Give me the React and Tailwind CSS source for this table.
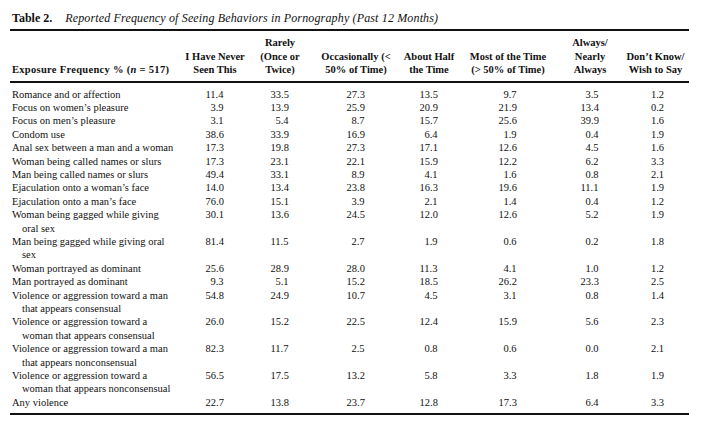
import React from "react";

const cols = "grid grid-cols-[172px_66px_64px_88px_58px_100px_64px_67px]";

const headers = [
  ["I Have Never", "Seen This"],
  ["Rarely", "(Once or", "Twice)"],
  ["Occasionally (<", "50% of Time)"],
  ["About Half", "the Time"],
  ["Most of the Time", "(> 50% of Time)"],
  ["Always/", "Nearly", "Always"],
  ["Don\u2019t Know/", "Wish to Say"],
];

const rows = [
  [["Romance and or affection"], "11.4 33.5 27.3 13.5 9.7 3.5 1.2"],
  [["Focus on women\u2019s pleasure"], "3.9 13.9 25.9 20.9 21.9 13.4 0.2"],
  [["Focus on men\u2019s pleasure"], "3.1 5.4 8.7 15.7 25.6 39.9 1.6"],
  [["Condom use"], "38.6 33.9 16.9 6.4 1.9 0.4 1.9"],
  [["Anal sex between a man and a woman"], "17.3 19.8 27.3 17.1 12.6 4.5 1.6"],
  [["Woman being called names or slurs"], "17.3 23.1 22.1 15.9 12.2 6.2 3.3"],
  [["Man being called names or slurs"], "49.4 33.1 8.9 4.1 1.6 0.8 2.1"],
  [["Ejaculation onto a woman\u2019s face"], "14.0 13.4 23.8 16.3 19.6 11.1 1.9"],
  [["Ejaculation onto a man\u2019s face"], "76.0 15.1 3.9 2.1 1.4 0.4 1.2"],
  [["Woman being gagged while giving", "oral sex"], "30.1 13.6 24.5 12.0 12.6 5.2 1.9"],
  [["Man being gagged while giving oral", "sex"], "81.4 11.5 2.7 1.9 0.6 0.2 1.8"],
  [["Woman portrayed as dominant"], "25.6 28.9 28.0 11.3 4.1 1.0 1.2"],
  [["Man portrayed as dominant"], "9.3 5.1 15.2 18.5 26.2 23.3 2.5"],
  [["Violence or aggression toward a man", "that appears consensual"], "54.8 24.9 10.7 4.5 3.1 0.8 1.4"],
  [["Violence or aggression toward a", "woman that appears consensual"], "26.0 15.2 22.5 12.4 15.9 5.6 2.3"],
  [["Violence or aggression toward a man", "that appears nonconsensual"], "82.3 11.7 2.5 0.8 0.6 0.0 2.1"],
  [["Violence or aggression toward a", "woman that appears nonconsensual"], "56.5 17.5 13.2 5.8 3.3 1.8 1.9"],
  [["Any violence"], "22.7 13.8 23.7 12.8 17.3 6.4 3.3"],
];

export default function App() {
  return (
    <div className="w-[714px] h-[438px] bg-white text-[#111] font-['Liberation_Serif',serif] text-[10.5px] leading-[13.4px] px-[10px] pt-[11px]">
      <div className="w-[679px]">
        <div className="pl-[2px] text-[12px] leading-[14px] mb-[4px] flex">
          <span className="font-bold">Table 2.</span>
          <span className="italic ml-[13px] tracking-[0.15px]">
            Reported Frequency of Seeing Behaviors in Pornography (Past 12 Months)
          </span>
        </div>
        <div className="h-[2px] bg-[#111]" />
        <div className={`${cols} items-end font-bold pt-[5px] pb-[4px] leading-[13.5px]`}>
          <div className="pl-[2px] tracking-[0.3px] whitespace-nowrap">
            Exposure Frequency % (<span className="italic">n</span> = 517)
          </div>
          {headers.map((h, i) => (
            <div key={i} className="text-center">
              {h.map((l, j) => (
                <div key={j} className="whitespace-nowrap">{l}</div>
              ))}
            </div>
          ))}
        </div>
        <div className="h-[2px] bg-[#111]" />
        <div className="pt-[5px] pb-[4px]">
          {rows.map(([label, nums], i) => (
            <div key={i} className={cols}>
              <div className="pl-[2px] whitespace-nowrap">
                <div>{label[0]}</div>
                {label[1] && <div className="pl-[10px]">{label[1]}</div>}
              </div>
              {nums.split(" ").map((n, j) => (
                <div key={j} className="flex justify-center">
                  <span className="w-[19px] text-right pr-[1px]">{n}</span>
                </div>
              ))}
            </div>
          ))}
        </div>
        <div className="h-[2px] bg-[#111]" />
      </div>
    </div>
  );
}
